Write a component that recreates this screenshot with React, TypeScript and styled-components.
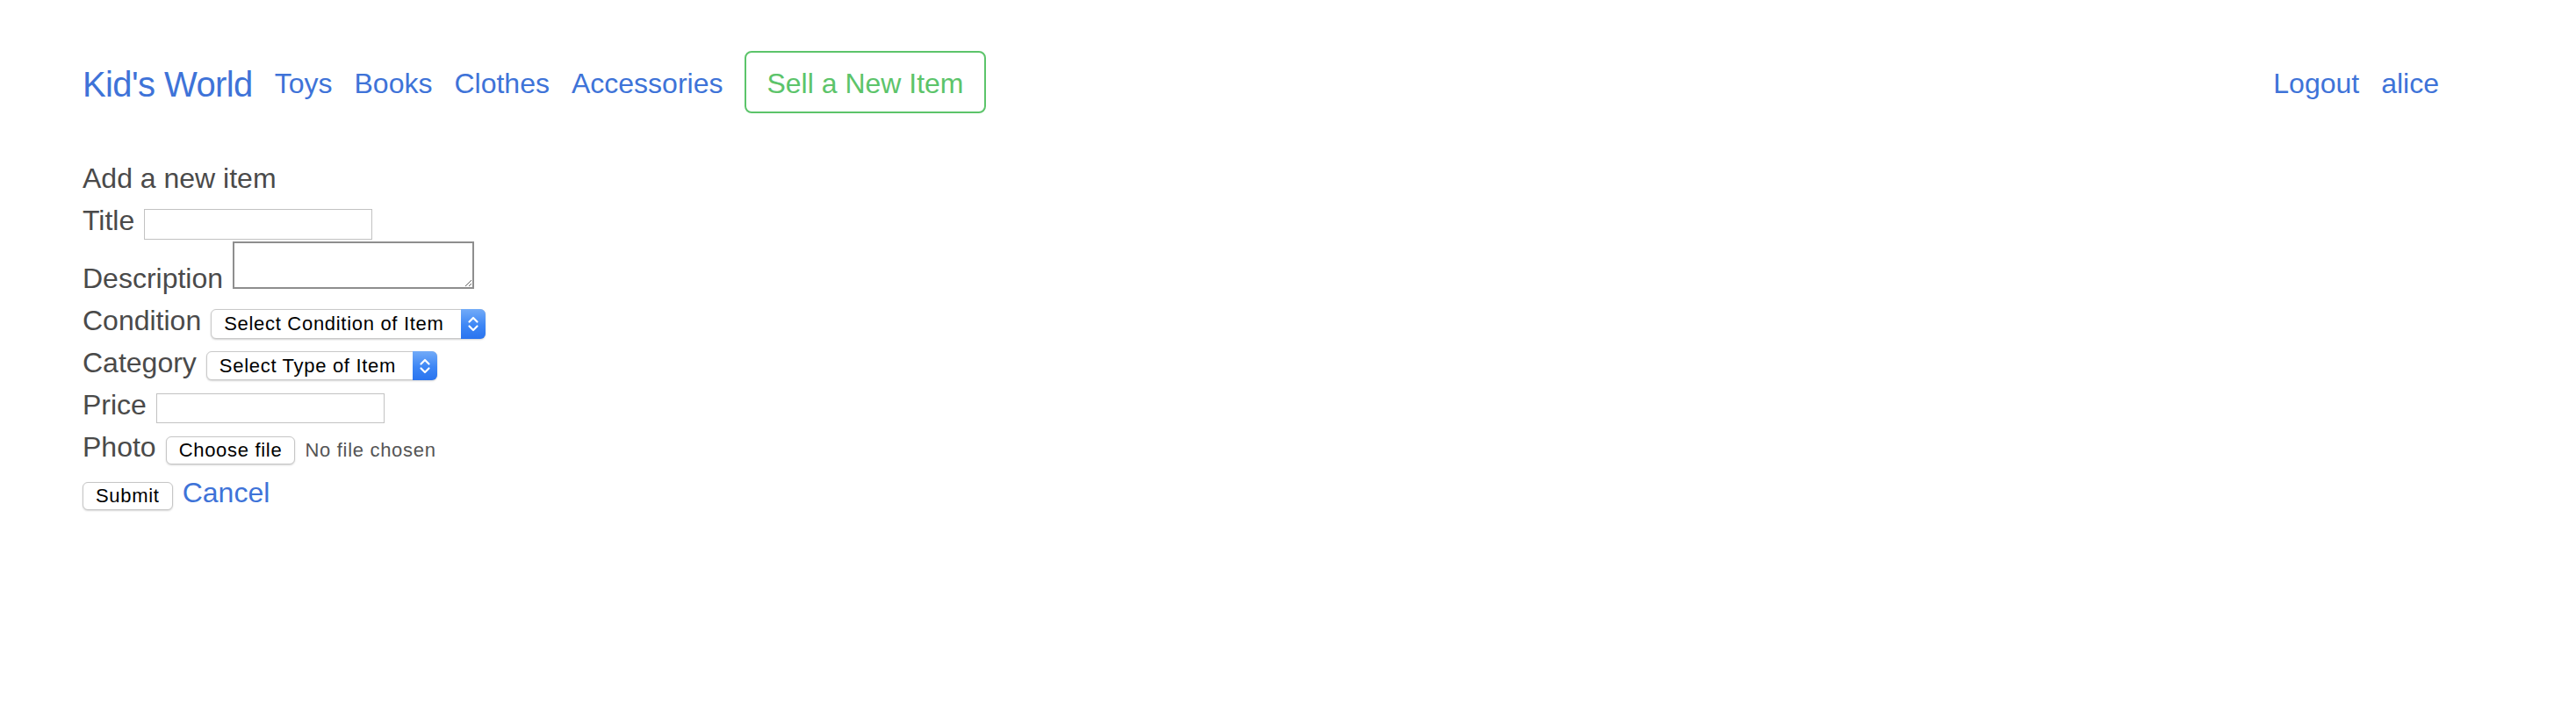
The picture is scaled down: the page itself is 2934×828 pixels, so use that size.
import React from 'react';
import styled, { createGlobalStyle } from 'styled-components';

const GlobalStyle = createGlobalStyle`
  html, body {
    margin: 0;
    padding: 0;
    background: #ffffff;
  }
  body {
    font-family: "Liberation Sans", Arial, sans-serif;
    color: #4a4a4a;
  }
  * {
    box-sizing: border-box;
  }
`;

const Page = styled.div`
  padding: 58px 156px 0 94px;
  min-height: 828px;
`;

const Navbar = styled.nav`
  display: flex;
  align-items: center;
  justify-content: space-between;
  height: 71px;
`;

const NavGroup = styled.div`
  display: flex;
  align-items: center;
  gap: 25px;
`;

const Brand = styled.a`
  font-size: 40px;
  line-height: 48px;
  letter-spacing: -0.6px;
  color: #3e73d8;
  text-decoration: none;
  padding-top: 5px;
`;

const NavLink = styled.a`
  font-size: 32px;
  line-height: 48px;
  color: #3e73d8;
  text-decoration: none;
  padding-top: 3px;
`;

const SellButton = styled.a`
  display: inline-flex;
  align-items: center;
  height: 71px;
  padding: 3px 23px 0;
  border: 2px solid #5cc46a;
  border-radius: 8px;
  font-size: 32px;
  color: #5cc46a;
  text-decoration: none;
`;

const Form = styled.form`
  margin-top: 50px;
  display: flex;
  flex-direction: column;
`;

const Heading = styled.div`
  font-size: 32px;
  line-height: 48px;
`;

const Row = styled.div<{ alignEnd?: boolean }>`
  display: flex;
  align-items: ${props => (props.alignEnd ? 'flex-end' : 'baseline')};
  gap: 11px;
  font-size: 32px;
  line-height: 48px;
`;

const Label = styled.label`
  font-size: 32px;
  line-height: 48px;
  color: #4a4a4a;
`;

const TextInput = styled.input`
  width: 260px;
  height: ${props => props.height || 35}px;
  border: 1px solid #c2c2c2;
  border-radius: 0;
  padding: 0 6px;
  font-family: "Liberation Sans", Arial, sans-serif;
  font-size: 22px;
  background: #fff;
  outline: none;
`;

const TextArea = styled.textarea`
  width: 275px;
  height: 54px;
  margin-bottom: 12px;
  border: 2px solid #8e8e8e;
  border-radius: 0;
  padding: 4px;
  font-family: "Liberation Sans", Arial, sans-serif;
  font-size: 22px;
  outline: none;
`;

const SelectWrap = styled.span`
  position: relative;
  display: inline-flex;
`;

const Select = styled.select<{ w: number; h: number }>`
  appearance: none;
  -webkit-appearance: none;
  width: ${props => props.w}px;
  height: ${props => props.h}px;
  padding: 0 34px 0 14px;
  border: 1px solid #c9c9c9;
  border-radius: 6px;
  background: #ffffff;
  box-shadow: 0 1px 2px rgba(0, 0, 0, 0.18);
  font-family: "Liberation Sans", Arial, sans-serif;
  font-size: 22px;
  letter-spacing: 0.7px;
  color: #000;
  outline: none;
`;

const Stepper = styled.span`
  position: absolute;
  top: 0;
  right: 0;
  bottom: 0;
  width: 28px;
  border-radius: 0 6px 6px 0;
  background: linear-gradient(to bottom, #72abf8 0%, #3d86f5 55%, #2a74ef 100%);
  display: flex;
  align-items: center;
  justify-content: center;
  pointer-events: none;
`;

const SystemButton = styled.button`
  height: 32px;
  padding: 0 14px;
  border: 1px solid #c6c6c6;
  border-radius: 6px;
  background: #ffffff;
  box-shadow: 0 1px 2px rgba(0, 0, 0, 0.16);
  font-family: "Liberation Sans", Arial, sans-serif;
  font-size: 22px;
  letter-spacing: 0.7px;
  color: #000;
  cursor: pointer;
`;

const HiddenFile = styled.input`
  display: none;
`;

const FileStatus = styled.span`
  font-size: 22px;
  letter-spacing: 0.7px;
  color: #555555;
`;

const FileGroup = styled.span`
  display: inline-flex;
  align-items: baseline;
  gap: 11px;
`;

const CancelLink = styled.a`
  font-size: 32px;
  line-height: 48px;
  color: #3e73d8;
  text-decoration: none;
`;

const StepperIcon = () => (
  <svg width="14" height="20" viewBox="0 0 14 20" fill="none">
    <path d="M2.5 7.5 L7 3 L11.5 7.5" stroke="#fff" strokeWidth="2.2" strokeLinecap="round" strokeLinejoin="round" />
    <path d="M2.5 12.5 L7 17 L11.5 12.5" stroke="#fff" strokeWidth="2.2" strokeLinecap="round" strokeLinejoin="round" />
  </svg>
);

interface SelectFieldProps {
  placeholder: string;
  options: string[];
  width: number;
  height: number;
}

const SelectField: React.FC<SelectFieldProps> = ({ placeholder, options, width, height }) => (
  <SelectWrap>
    <Select w={width} h={height} defaultValue="">
      <option value="">{placeholder}</option>
      {options.map(o => (
        <option key={o} value={o}>{o}</option>
      ))}
    </Select>
    <Stepper>
      <StepperIcon />
    </Stepper>
  </SelectWrap>
);

const navLinks = ['Toys', 'Books', 'Clothes', 'Accessories'];

export default function App() {
  return (
    <>
      <GlobalStyle />
      <Page>
        <Navbar>
          <NavGroup>
            <Brand href="#">Kid's World</Brand>
            {navLinks.map(l => (
              <NavLink key={l} href="#">{l}</NavLink>
            ))}
            <SellButton href="#">Sell a New Item</SellButton>
          </NavGroup>
          <NavGroup>
            <NavLink href="#">Logout</NavLink>
            <NavLink href="#">alice</NavLink>
          </NavGroup>
        </Navbar>

        <Form onSubmit={e => e.preventDefault()}>
          <Heading>Add a new item</Heading>
          <Row>
            <Label htmlFor="title">Title</Label>
            <TextInput id="title" type="text" />
          </Row>
          <Row alignEnd>
            <Label htmlFor="description">Description</Label>
            <TextArea id="description" />
          </Row>
          <Row>
            <Label>Condition</Label>
            <SelectField
              placeholder="Select Condition of Item"
              options={['New', 'Like New', 'Good', 'Fair']}
              width={313}
              height={34}
            />
          </Row>
          <Row>
            <Label>Category</Label>
            <SelectField
              placeholder="Select Type of Item"
              options={['Toys', 'Books', 'Clothes', 'Accessories']}
              width={263}
              height={33}
            />
          </Row>
          <Row>
            <Label htmlFor="price">Price</Label>
            <TextInput id="price" type="text" height={34} />
          </Row>
          <Row>
            <Label>Photo</Label>
            <FileGroup>
              <SystemButton type="button">Choose file</SystemButton>
              <HiddenFile type="file" />
              <FileStatus>No file chosen</FileStatus>
            </FileGroup>
          </Row>
          <Row>
            <SystemButton type="submit">Submit</SystemButton>
            <CancelLink href="#">Cancel</CancelLink>
          </Row>
        </Form>
      </Page>
    </>
  );
}
